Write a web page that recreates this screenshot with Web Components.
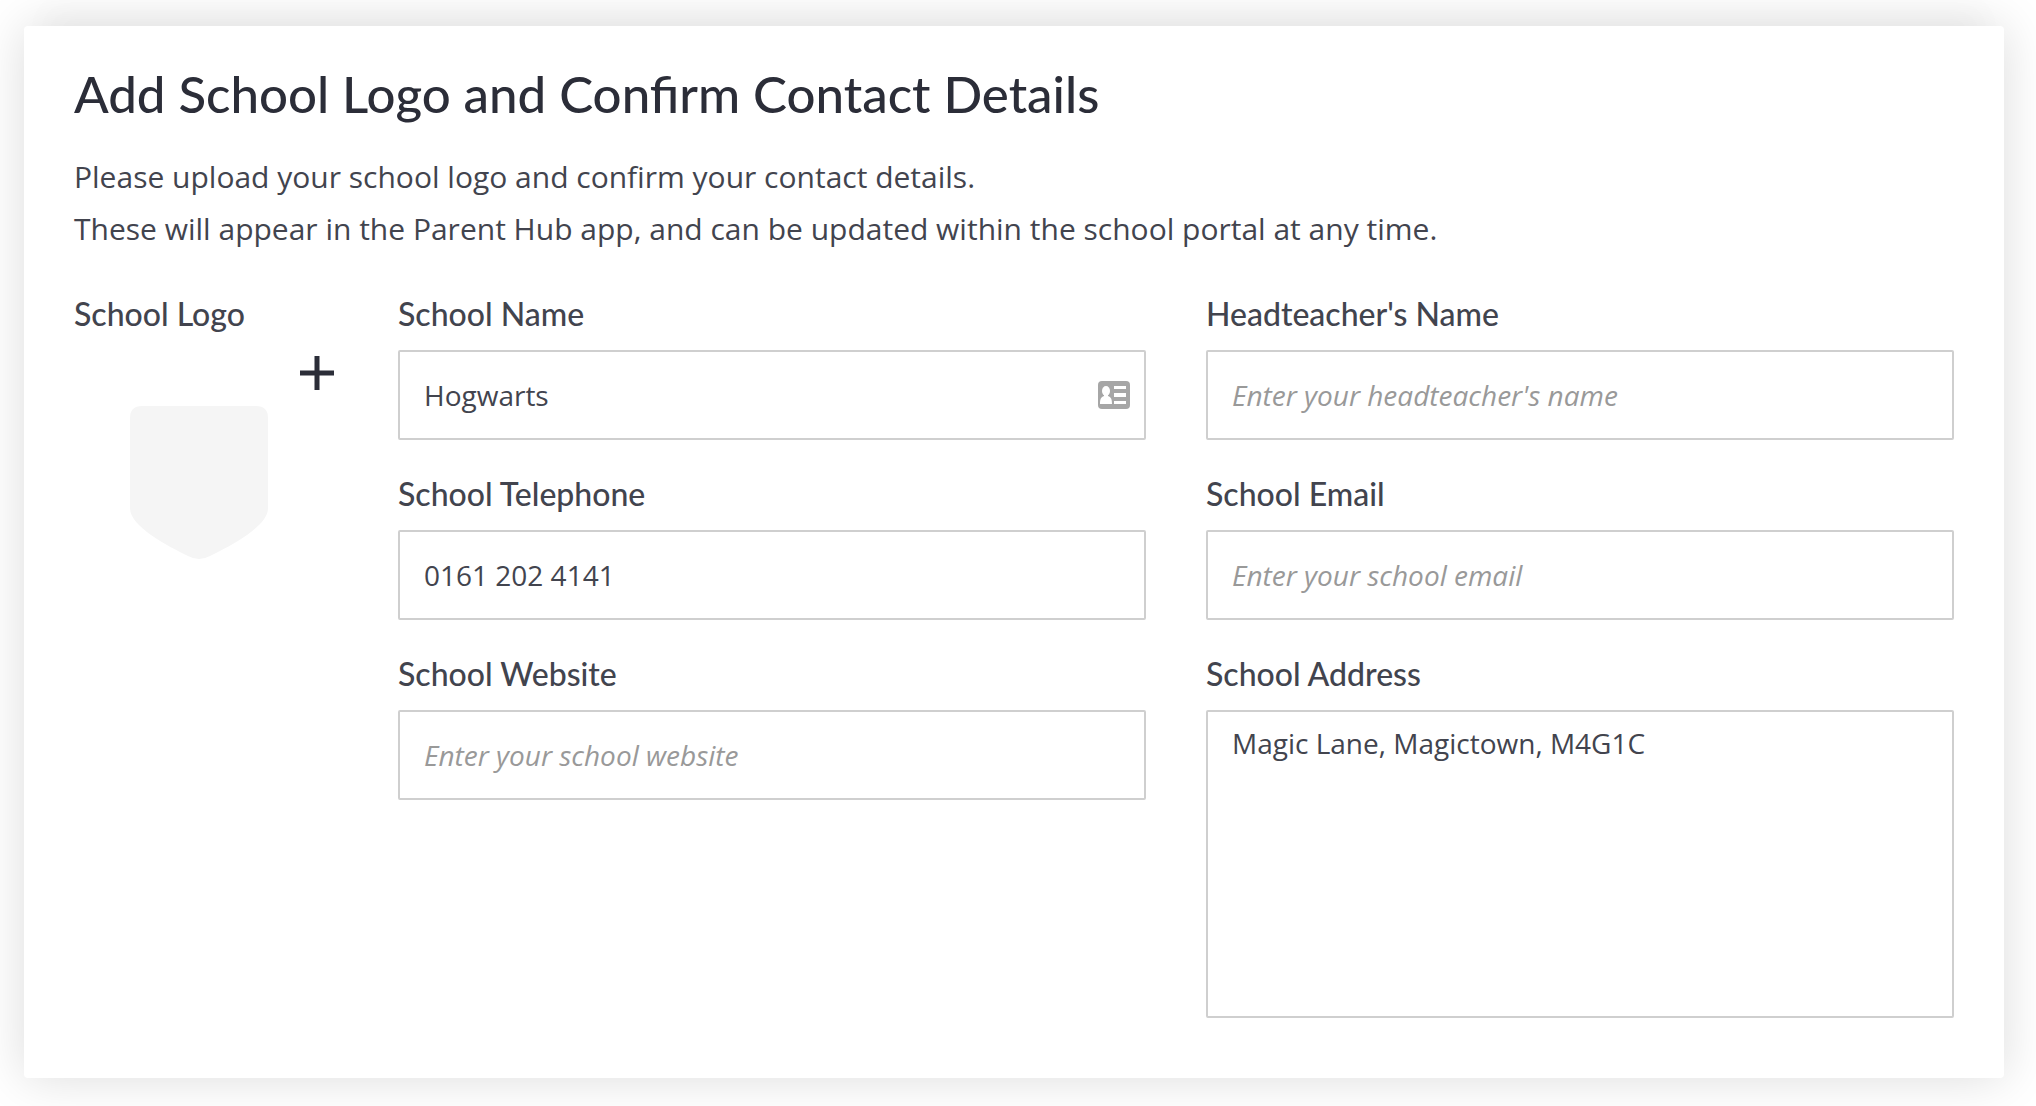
<!DOCTYPE html>
<html lang="en">
<head>
<meta charset="utf-8">
<title>School details</title>
<style>
body { margin: 0; background: #fff; font-family: "Open Sans", "Noto Sans", sans-serif; color: #42444e; }
</style>
</head>
<body>
<details-card>
  <span slot="title">Add School Logo and Confirm Contact Details</span>
  <p slot="intro">Please upload your school logo and confirm your contact details.<br>These will appear in the Parent Hub app, and can be updated within the school portal at any time.</p>
  <logo-upload slot="logo" label="School Logo"></logo-upload>
  <form-field slot="left" label="School Name" value="Hogwarts" contact></form-field>
  <form-field slot="left" label="School Telephone" type="tel" value="0161 202 4141"></form-field>
  <form-field slot="left" label="School Website" placeholder="Enter your school website"></form-field>
  <form-field slot="right" label="Headteacher's Name" placeholder="Enter your headteacher's name"></form-field>
  <form-field slot="right" label="School Email" type="email" placeholder="Enter your school email"></form-field>
  <form-field slot="right" label="School Address" multiline value="Magic Lane, Magictown, M4G1C"></form-field>
</details-card>
<script>
const labelStyle = `
  .label { display: block; font: 500 32px/40px Lato, "Open Sans", sans-serif; color: #42444e; margin: 0 0 16px; }
`;

class DetailsCard extends HTMLElement {
  constructor() {
    super();
    this.attachShadow({ mode: "open" }).innerHTML = `
      <style>
        :host { display: block; padding: 26px 32px 28px 24px; }
        .card { background: #fff; border-radius: 4px; padding: 38px 50px 60px; box-shadow: 0 0 50px rgba(0, 0, 0, .14), 0 -40px 30px -20px rgba(0, 0, 0, .02); }
        h1 { margin: 0 0 27px; font: 500 51px/60px Lato, "Open Sans", sans-serif; color: #2b2d38; }
        ::slotted(p) { margin: 0 0 39px; font-size: 30px; line-height: 52px; }
        .columns { display: grid; grid-template-columns: 264px 1fr 1fr; column-gap: 60px; align-items: start; }
        .stack { display: grid; row-gap: 34px; }
      </style>
      <section class="card">
        <h1><slot name="title"></slot></h1>
        <slot name="intro"></slot>
        <form class="columns">
          <slot name="logo"></slot>
          <div class="stack"><slot name="left"></slot></div>
          <div class="stack"><slot name="right"></slot></div>
        </form>
      </section>`;
  }
}

class LogoUpload extends HTMLElement {
  connectedCallback() {
    this.attachShadow({ mode: "open" }).innerHTML = `
      <style>
        :host { display: block; }
        ${labelStyle}
        .drop { display: flex; flex-direction: column; align-items: flex-end; }
        button { display: block; padding: 6px 4px 16px; border: 0; background: none; cursor: pointer; }
        svg { display: block; }
        .shield { align-self: flex-start; margin-left: 56px; }
      </style>
      <span class="label" id="logo-label">${this.getAttribute("label")}</span>
      <div class="drop">
        <button type="button" aria-labelledby="logo-label">
          <svg width="34" height="34" viewBox="0 0 34 34" aria-hidden="true"><path d="M17 0v34M0 17h34" stroke="#2b2d38" stroke-width="5"/></svg>
        </button>
        <svg class="shield" width="138" height="153" viewBox="0 0 138 153" aria-hidden="true"><path fill="#f5f5f5" d="M12 0H126Q138 0 138 12V102C138 112 128 121 117 129C104 138 92 144 80 150Q69 156 58 150C46 144 34 138 21 129C10 121 0 112 0 102V12Q0 0 12 0Z"/></svg>
      </div>`;
  }
}

class FormField extends HTMLElement {
  connectedCallback() {
    const root = this.attachShadow({ mode: "open" });
    const multiline = this.hasAttribute("multiline");
    root.innerHTML = `
      <style>
        :host { display: block; }
        ${labelStyle}
        .box { display: flex; align-items: center; box-sizing: border-box; border: 2px solid #cfcfcf; border-radius: 2px; background: #fff; }
        input, textarea { flex: 1; min-width: 0; box-sizing: border-box; margin: 0; border: 0; outline: 0; background: none; color: #42444e; font: 28px/38px "Open Sans", "Noto Sans", sans-serif; }
        input { height: 86px; padding: 0 24px; }
        textarea { height: 304px; padding: 12px 24px; resize: none; }
        ::placeholder { color: #999; font-style: italic; opacity: 1; }
        svg { flex: none; margin-right: 14px; }
      </style>
      <label class="label" for="control">${this.getAttribute("label")}</label>
      <div class="box">
        ${multiline ? `<textarea id="control"></textarea>` : `<input id="control">`}
        ${this.hasAttribute("contact") ? `<svg width="32" height="28" viewBox="0 0 32 28" aria-hidden="true">
          <rect width="32" height="28" rx="4" fill="#a6a6a6"/>
          <g fill="#fff"><ellipse cx="8" cy="10" rx="4" ry="5"/><path d="M6 13h4v2c3 1 4 3 4 8H2c0-5 1-7 4-8Z"/><path d="M16 5h12v3H16zM16 12h12v4H16zM16 20h12v3H16z"/></g>
        </svg>` : ""}
      </div>`;
    const control = root.getElementById("control");
    if (!multiline) control.type = this.getAttribute("type") || "text";
    control.placeholder = this.getAttribute("placeholder") || "";
    control.value = this.getAttribute("value") || "";
  }
}

customElements.define("details-card", DetailsCard);
customElements.define("logo-upload", LogoUpload);
customElements.define("form-field", FormField);
</script>
</body>
</html>
